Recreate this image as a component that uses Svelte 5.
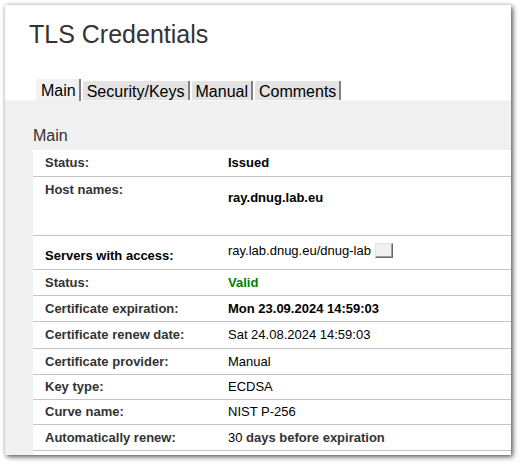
<script>
  const tabs = ['Main', 'Security/Keys', 'Manual', 'Comments'];
  let active = $state('Main');

  const rows = [
    { label: 'Status:', value: 'Issued', tone: 'strong', size: 'h26' },
    { label: 'Host names:', value: 'ray.dnug.lab.eu', tone: 'strong', size: 'hosts' },
    { label: 'Servers with access:', value: 'ray.lab.dnug.eu/dnug-lab', picker: true, size: 'servers' },
    { label: 'Status:', value: 'Valid', tone: 'valid', size: 'h25' },
    { label: 'Certificate expiration:', value: 'Mon 23.09.2024 14:59:03', tone: 'strong', size: 'h25' },
    { label: 'Certificate renew date:', value: 'Sat 24.08.2024 14:59:03', size: 'h26' },
    { label: 'Certificate provider:', value: 'Manual', size: 'h25' },
    { label: 'Key type:', value: 'ECDSA', size: 'h24' },
    { label: 'Curve name:', value: 'NIST P-256', size: 'h24' },
    { label: 'Automatically renew:', value: '30', suffix: 'days before expiration', size: 'h25' }
  ];
</script>

<main class="window">
  <h1>TLS Credentials</h1>
  <div class="tabs" role="tablist">
    {#each tabs as tab}
      <button
        type="button"
        role="tab"
        class="tab"
        class:active={tab === active}
        aria-selected={tab === active}
        onclick={() => (active = tab)}>{tab}</button>
    {/each}
  </div>
  <section class="panel">
    <h2>Main</h2>
    <table>
      <tbody>
        {#each rows as row}
          <tr class={row.size}>
            <th scope="row">{row.label}</th>
            <td class={row.tone}>
              {row.value}
              {#if row.picker}<button type="button" class="picker" aria-label="Select servers"></button>{/if}
              {#if row.suffix}<b>{row.suffix}</b>{/if}
            </td>
          </tr>
        {/each}
      </tbody>
    </table>
    <div class="rest"></div>
  </section>
</main>

<style>
  :global(body) {
    margin: 0;
    background: #fff;
  }
  .window {
    margin: 5px 9px 9px 5px;
    background: #fff;
    box-shadow: 0 0 4px rgba(0, 0, 0, 0.2), 2px 2px 5px rgba(0, 0, 0, 0.6);
    font-family: "Liberation Sans", Arial, sans-serif;
    font-size: 13px;
    color: #000;
    overflow: hidden;
  }
  h1 {
    margin: 0;
    padding: 14px 24px 30px;
    font-size: 25px;
    line-height: 30px;
    font-weight: 400;
    color: #333;
  }
  .tabs {
    display: flex;
    align-items: flex-end;
    gap: 2px;
    height: 21px;
    padding-left: 31px;
  }
  .tab {
    box-sizing: border-box;
    height: 19px;
    padding: 0 3px 0 4px;
    border: 0;
    border-right: 2px solid #808080;
    border-radius: 2px 0 0 0;
    background: #e3e3e3;
    font-family: inherit;
    font-size: 16px;
    line-height: 21px;
    color: #000;
  }
  .tab.active {
    position: relative;
    height: 22px;
    margin-bottom: -1px;
    padding: 0 3px 0 5px;
    background: #f1f1f1;
    line-height: 24px;
  }
  .panel {
    padding-left: 28px;
    border-top: 1px solid #f6f6f6;
    background: #f0f0f0;
  }
  h2 {
    margin: 0;
    padding: 25px 0 4px;
    font-size: 16px;
    line-height: 20px;
    font-weight: 400;
    color: #333;
  }
  table {
    width: 100%;
    border-collapse: separate;
    border-spacing: 0;
    background: #fff;
  }
  th,
  td {
    padding: 0;
    border-bottom: 1px solid #c4c4c4;
    line-height: 16px;
    text-align: left;
    vertical-align: middle;
    white-space: nowrap;
  }
  th {
    width: 183px;
    padding-left: 12px;
    font-weight: 700;
    color: #333;
  }
  .h24 > * { height: 24px; }
  .h25 > * { height: 25px; }
  .h26 > * { height: 26px; }
  .hosts > * { vertical-align: top; }
  .hosts th {
    height: 53px;
    padding-top: 5px;
  }
  .hosts td {
    height: 45px;
    padding-top: 13px;
  }
  .servers > * { vertical-align: top; }
  .servers th {
    height: 21px;
    padding-top: 12px;
    color: #000;
  }
  .servers td {
    height: 26px;
    padding-top: 7px;
  }
  .strong { font-weight: 700; }
  .valid {
    font-weight: 700;
    color: #008000;
  }
  b { color: #333; }
  .picker {
    box-sizing: border-box;
    width: 18px;
    height: 15px;
    margin-left: 1px;
    padding: 0;
    border: 1px solid #e3e3e3;
    border-right-color: #696969;
    border-bottom-color: #696969;
    box-shadow: inset -1px -1px #a0a0a0;
    background: #f0f0f0;
    vertical-align: -2px;
  }
  .rest {
    height: 4px;
    background: #fff;
  }
</style>
